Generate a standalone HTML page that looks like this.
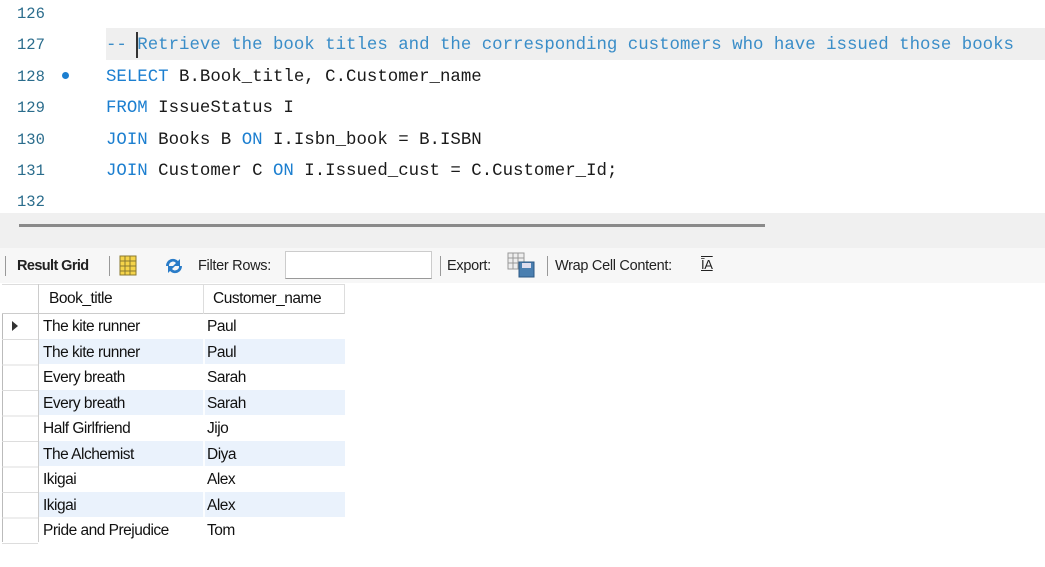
<!DOCTYPE html>
<html><head><meta charset="utf-8"><style>
*{margin:0;padding:0;box-sizing:border-box}
body{width:1045px;height:567px;background:#fff;position:relative;overflow:hidden;font-family:"Liberation Sans",sans-serif}
.ln{position:absolute;left:17px;font:15.5px "Liberation Mono",monospace;color:#2a6c8c}
.code{position:absolute;left:106px;font:17.4px "Liberation Mono",monospace;color:#1a1a1a;white-space:pre;line-height:20px}
.k{color:#1c7fd0}.c{color:#3a8dc8}
.tb{position:absolute;font-size:14.5px;color:#222;letter-spacing:-0.3px}
.cell{position:absolute;font-size:15.5px;color:#111;letter-spacing:-0.5px;line-height:25.5px}
.row{position:absolute;left:39px;width:306px;height:25px}
</style></head><body>
<div style="position:absolute;left:106px;top:28px;width:939px;height:32px;background:#efefef"></div>
<div style="position:absolute;left:136px;top:32px;width:2px;height:26px;background:#333"></div>
<div class="ln" style="top:5px">126</div>
<div class="ln" style="top:36px">127</div>
<div class="ln" style="top:68px">128</div>
<div style="position:absolute;left:62px;top:72px;width:7px;height:7px;border-radius:50%;background:#1c7fd0"></div>
<div class="ln" style="top:99px">129</div>
<div class="ln" style="top:131px">130</div>
<div class="ln" style="top:162px">131</div>
<div class="ln" style="top:193px">132</div>
<div class="code c" style="top:36px">-- Retrieve the book titles and the corresponding customers who have issued those books</div>
<div class="code" style="top:68px"><span class="k">SELECT</span> B.Book_title, C.Customer_name</div>
<div class="code" style="top:99px"><span class="k">FROM</span> IssueStatus I</div>
<div class="code" style="top:131px"><span class="k">JOIN</span> Books B <span class="k">ON</span> I.Isbn_book = B.ISBN</div>
<div class="code" style="top:162px"><span class="k">JOIN</span> Customer C <span class="k">ON</span> I.Issued_cust = C.Customer_Id;</div>
<div style="position:absolute;left:0;top:213px;width:1045px;height:35px;background:#f0f0f0"></div>
<div style="position:absolute;left:19px;top:224px;width:746px;height:3px;background:#8a8a8a"></div>
<div style="position:absolute;left:0;top:248px;width:1045px;height:35px;background:#f7f7f7"></div>
<div style="position:absolute;left:5px;top:256px;width:1px;height:20px;background:#999"></div>
<div class="tb" style="left:17px;top:258px;font-weight:bold;letter-spacing:-0.6px">Result Grid</div>
<div style="position:absolute;left:109px;top:256px;width:1px;height:20px;background:#999"></div>
<svg style="position:absolute;left:119px;top:255px" width="20" height="22"><rect x="1" y="1" width="16" height="19" fill="#f5d44a" stroke="#8a7a30"/><path d="M6 1v19M11 1v19M1 6h16M1 11h16M1 16h16" stroke="#8a7a30"/></svg>
<svg style="position:absolute;left:162px;top:255px" width="24" height="22"><path d="M4 11a7 7 0 0 1 12-5l2-2v7h-7l3-3a4 4 0 0 0-7 3z" fill="#2a7cc8"/><path d="M20 11a7 7 0 0 1-12 5l-2 2v-7h7l-3 3a4 4 0 0 0 7-3z" fill="#2a7cc8"/></svg>
<div class="tb" style="left:198px;top:258px">Filter Rows:</div>
<div style="position:absolute;left:285px;top:251px;width:147px;height:28px;background:#fff;border:1px solid #ccc;border-bottom-color:#999"></div>
<div style="position:absolute;left:440px;top:256px;width:1px;height:20px;background:#999"></div>
<div class="tb" style="left:447px;top:258px">Export:</div>
<svg style="position:absolute;left:507px;top:252px" width="30" height="26"><rect x="1" y="1" width="16" height="16" fill="#eee" stroke="#999"/><path d="M6 1v16M11 1v16M1 6h16M1 11h16" stroke="#999"/><rect x="12" y="10" width="15" height="15" fill="#4a7fb0" stroke="#2c5a86"/><rect x="15" y="11" width="9" height="5" fill="#dde"/></svg>
<div style="position:absolute;left:547px;top:256px;width:1px;height:20px;background:#999"></div>
<div class="tb" style="left:555px;top:258px">Wrap Cell Content:</div>
<div class="tb" style="left:701px;top:257px;font-size:13px;text-decoration:underline overline">ĪA</div>
<!-- grid -->
<div style="position:absolute;left:2px;top:284px;width:1px;height:258px;background:#bbb"></div>
<div style="position:absolute;left:2px;top:284px;width:343px;height:30px;background:#fff;border-top:1px solid #ddd;border-bottom:1px solid #ccc;border-right:1px solid #ddd"></div>
<div style="position:absolute;left:38px;top:284px;width:1px;height:258px;background:#ccc"></div>
<div style="position:absolute;left:203px;top:284px;width:1px;height:30px;background:#ddd"></div>
<div class="cell" style="left:49px;top:286px">Book_title</div>
<div class="cell" style="left:213px;top:286px">Customer_name</div>
<div class="row" style="top:339px;background:#eaf2fc"></div>
<div class="row" style="top:390px;background:#eaf2fc"></div>
<div class="row" style="top:441px;background:#eaf2fc"></div>
<div class="row" style="top:492px;background:#eaf2fc"></div>
<div style="position:absolute;left:203px;top:314px;width:2px;height:228px;background:rgba(255,255,255,.8)"></div>
<svg style="position:absolute;left:11px;top:320px" width="8" height="12"><path d="M1 1l6 5-6 5z" fill="#333"/></svg>
<div style="position:absolute;left:2px;top:339px;width:36px;height:1px;background:#ddd;box-shadow:0 25.5px #ddd,0 51px #ddd,0 76.5px #ddd,0 102px #ddd,0 127.5px #ddd,0 153px #ddd,0 178.5px #ddd,0 204px #ddd"></div>
<div class="cell" style="left:43px;top:314px">The kite runner<br>The kite runner<br>Every breath<br>Every breath<br>Half Girlfriend<br>The Alchemist<br>Ikigai<br>Ikigai<br>Pride and Prejudice</div>
<div class="cell" style="left:207px;top:314px">Paul<br>Paul<br>Sarah<br>Sarah<br>Jijo<br>Diya<br>Alex<br>Alex<br>Tom</div>
</body></html>
